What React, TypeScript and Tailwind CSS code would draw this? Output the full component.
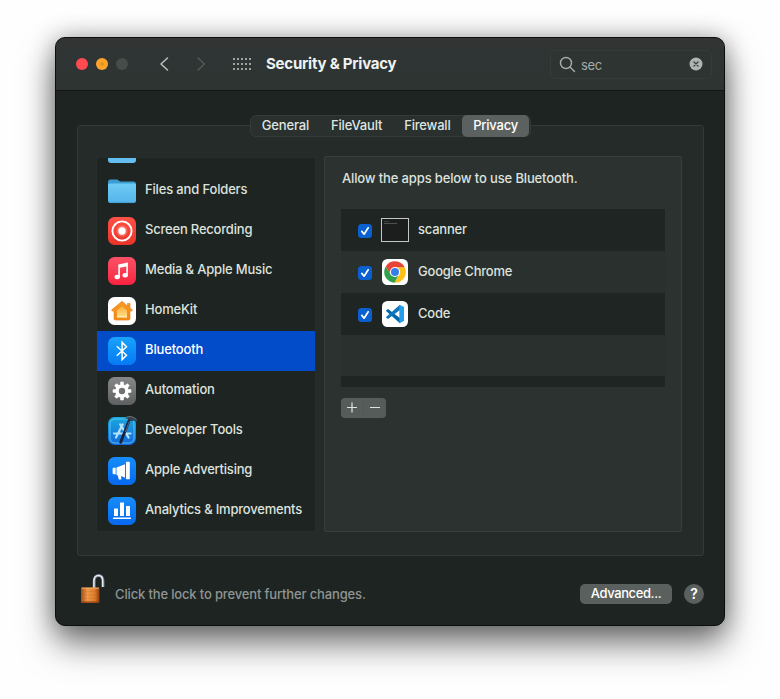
import type { ReactNode } from "react";

function Tile({ className, children }: { className: string; children: ReactNode }) {
  return (
    <div className={`flex h-7 w-7 items-center justify-center rounded-[6.5px] ${className}`}>{children}</div>
  );
}

function Folder() {
  return (
    <svg width="28" height="28" viewBox="0 0 28 28">
      <defs>
        <linearGradient id="folder" x1="0" y1="0" x2="0" y2="1">
          <stop offset="0" stopColor="#6fcbf6" />
          <stop offset="1" stopColor="#54b4ea" />
        </linearGradient>
      </defs>
      <path d="M0 5.2C0 3.400 .9 2.500 2.600 2.500h6.200c1.600 0 2 1.900 3.600 1.900h13C27.200 4.400 28 5.300 28 7v6H0z" fill="#3a9ccf" />
      <path d="M0 8.500C0 7.300.7 6.600 2 6.600h24c1.300 0 2 .7 2 1.900V23.500c0 1.700-.9 2.600-2.600 2.600H2.600C.9 26.100 0 25.200 0 23.500z" fill="url(#folder)" />
      <path d="M.5 24.300c.4.900 1.100 1.300 2.100 1.300h22.800c1 0 1.700-.4 2.100-1.300" fill="none" stroke="#3d98cc" strokeWidth=".8" />
    </svg>
  );
}

function Recording() {
  return (
    <Tile className="bg-linear-to-b from-[#ff5146] to-[#ea3328]">
      <svg width="28" height="28" viewBox="0 0 28 28">
        <circle cx="14" cy="14" r="9.600" fill="none" stroke="#fff" strokeWidth="1.900" />
        <circle cx="14" cy="14" r="5.500" fill="#ffb9ae" opacity=".35" />
        <circle cx="14" cy="14" r="3.700" fill="#fff" />
      </svg>
    </Tile>
  );
}

function Music() {
  return (
    <Tile className="bg-linear-to-b from-[#fb5066] to-[#f7203f]">
      <svg width="28" height="28" viewBox="0 0 28 28" fill="#fff">
        <path d="M10.300 7.600 19.900 5.500v12h-1.600V9.400l-6.400 1.400v9.200h-1.600z" />
        <ellipse cx="9.200" cy="20" rx="2.700" ry="2.200" />
        <ellipse cx="17.200" cy="18.300" rx="2.700" ry="2.200" />
      </svg>
    </Tile>
  );
}

function Home() {
  return (
    <Tile className="bg-white">
      <svg width="28" height="28" viewBox="0 0 28 28">
        <defs>
          <linearGradient id="home" x1="0" y1="0" x2="0" y2="1">
            <stop offset="0" stopColor="#f79a24" />
            <stop offset="1" stopColor="#f58b17" />
          </linearGradient>
          <linearGradient id="homeGlow" x1="0" y1="0" x2="0" y2="1">
            <stop offset="0" stopColor="#ffae3d" />
            <stop offset="1" stopColor="#ffe08a" />
          </linearGradient>
        </defs>
        <path d="M14 4.300 4 12.600c-.7.700-.3 1.500.5 1.500H6v7.400c0 1 .6 1.600 1.600 1.600h12.800c1 0 1.600-.6 1.600-1.600v-7.400h1.500c.8 0 1.200-.8.500-1.500L22 11V6.500h-2.500V9z" fill="url(#home)" stroke="#e97e14" strokeWidth=".6" strokeLinejoin="round" />
        <path d="M14 9.300 9 13.500v6.700h10v-6.700z" fill="url(#homeGlow)" />
        <path d="M9 19.800h10" stroke="#fff3c4" strokeWidth="1.200" />
      </svg>
    </Tile>
  );
}

function BluetoothIcon() {
  return (
    <Tile className="bg-linear-to-b from-[#1aa3fb] to-[#087af5]">
      <svg width="28" height="28" viewBox="0 0 28 28" fill="none" stroke="#fff" strokeWidth="1.500" strokeLinejoin="miter">
        <path d="m8.800 9.300 9.700 9-4.400 4.300V5.400l4.400 4.300-9.700 9" />
      </svg>
    </Tile>
  );
}

const teeth = [0, 45, 90, 135, 180, 225, 270, 315];

function Gear() {
  return (
    <Tile className="bg-linear-to-b from-[#88888b] to-[#5f6062]">
      <svg width="28" height="28" viewBox="0 0 28 28">
        {teeth.map((a) => (
          <path key={a} d="M12.200 8.500 12.700 5h2.600l.5 3.500z" fill="#fff" stroke="#fff" strokeWidth=".6" transform={`rotate(${a} 14 14)`} />
        ))}
        <circle cx="14" cy="14" r="4.900" fill="none" stroke="#fff" strokeWidth="3.400" />
      </svg>
    </Tile>
  );
}

function Xcode() {
  return (
    <svg width="32" height="30" viewBox="0 0 32 30" className="-mt-0.5 shrink-0">
      <defs>
        <linearGradient id="xcode" x1="0" y1="0" x2="0" y2="1">
          <stop offset="0" stopColor="#1aa8dd" />
          <stop offset="1" stopColor="#1469dc" />
        </linearGradient>
      </defs>
      <rect x="0" y="2" width="28" height="28" rx="6.500" fill="url(#xcode)" />
      <rect x="2" y="4" width="24" height="24" rx="4.800" fill="none" stroke="#59c8f4" strokeWidth=".9" />
      <g stroke="#b4e2fc" strokeWidth="2.200" strokeLinecap="round">
        <path d="M14.600 9.500 8 22.500M12.200 9.500 20.600 22.500M6 18.500h16.500" />
      </g>
      <path d="M21.300 5 12.700 27.300" stroke="#17233c" strokeWidth="2.900" strokeLinecap="round" />
      <path d="m21.500 6-4.200 11" stroke="#68758a" strokeWidth=".8" />
      <path d="M16.800 3.200c4.400-3.500 9.300-2 12.600 2.100l-.6 1.200c-1.800-1.300-3.200-1.100-4.700-.3l-2.800-1.100c-1.100-1.400-2.600-1.700-4.500-1.900z" fill="#36414b" />
      <path d="M17.500 2.700c4.100-2.400 8-.9 11 1.900" fill="none" stroke="#7d8f97" strokeWidth=".7" />
    </svg>
  );
}

function Megaphone() {
  return (
    <Tile className="bg-linear-to-b from-[#178dfb] to-[#0868ee]">
      <svg width="28" height="28" viewBox="0 0 28 28" fill="#fff">
        <path d="M5.500 10.800h2.200v6.400H6.100c-1 0-1.500-.5-1.500-1.300v-3.700c0-.9.400-1.400.900-1.400z" />
        <path d="M8.500 10.400 17 7.200v13.500l-3.800-1.700.1 3.600h-2.500l-1-4.200-1.300-.5z" />
        <path d="M18 5.800c0-.7.400-1 1-1h1.800c.7 0 1 .4 1 1v15.400c0 .7-.3 1-1 1H19c-.6 0-1-.3-1-1z" />
      </svg>
    </Tile>
  );
}

function Analytics() {
  return (
    <Tile className="bg-linear-to-b from-[#178dfb] to-[#0868ee]">
      <svg width="28" height="28" viewBox="0 0 28 28" fill="#fff">
        <rect x="6" y="11.500" width="4" height="7.500" rx=".6" />
        <rect x="12" y="5.500" width="4" height="13.500" rx=".6" />
        <rect x="18" y="9" width="4" height="10" rx=".6" />
        <rect x="5" y="20.400" width="18" height="1.500" rx=".5" />
      </svg>
    </Tile>
  );
}

const categories: { label: string; icon: ReactNode; tracking: string }[] = [
  { label: "Files and Folders", icon: <Folder />, tracking: "tracking-[-0.16px]" },
  { label: "Screen Recording", icon: <Recording />, tracking: "tracking-[-0.2px]" },
  { label: "Media & Apple Music", icon: <Music />, tracking: "tracking-[-0.18px]" },
  { label: "HomeKit", icon: <Home />, tracking: "tracking-[-0.2px]" },
  { label: "Bluetooth", icon: <BluetoothIcon />, tracking: "tracking-[-0.14px]" },
  { label: "Automation", icon: <Gear />, tracking: "tracking-[-0.18px]" },
  { label: "Developer Tools", icon: <Xcode />, tracking: "tracking-[-0.18px]" },
  { label: "Apple Advertising", icon: <Megaphone />, tracking: "tracking-[-0.22px]" },
  { label: "Analytics & Improvements", icon: <Analytics />, tracking: "tracking-[-0.2px]" },
];

function Terminal() {
  return (
    <svg width="28" height="28" viewBox="0 0 28 28">
      <rect x=".5" y="2.500" width="27" height="23" fill="#1c1e1e" stroke="#c2c8c5" />
      <path d="M3 7.500h13" stroke="#4c5250" strokeWidth="1" />
      <path d="M3 5.500h5" stroke="#3b403e" strokeWidth="1" />
    </svg>
  );
}

function Chrome() {
  return (
    <svg width="28" height="28" viewBox="0 0 28 28">
      <rect x="1" y="1" width="26" height="26" rx="5.500" fill="#fff" />
      <path d="M14 9.200h9.700A10.800 10.800 0 0 1 13.400 24.800L18.200 16.400z" fill="#fbc116" />
      <path d="M9.800 16.400 4.700 8.500A10.800 10.800 0 0 1 23.700 9.200H14z" fill="#e64435" />
      <path d="M4.700 8.500 9.800 16.400 14 18.800l3.500-1.300-4.100 7.300A10.800 10.800 0 0 1 4.700 8.500z" fill="#30a04c" />
      <circle cx="14" cy="14" r="5.100" fill="#fff" />
      <circle cx="14" cy="14" r="4" fill="#387ee8" />
    </svg>
  );
}

function Code() {
  return (
    <svg width="28" height="28" viewBox="0 0 28 28">
      <rect x="1" y="1" width="26" height="26" rx="5.500" fill="#fff" />
      <path d="M4.800 10.700 7 9 19.200 18.200v5.400z" fill="#0065a9" />
      <path d="M4.800 17.300 7 19 19.200 9.800V4.400z" fill="#0d75bd" />
      <path d="m18.300 4.700 4.700 2.200v14.200l-4.700 2.200z" fill="#249ded" />
    </svg>
  );
}

const apps = [
  { label: "scanner", icon: <Terminal />, row: "bg-[#1e2523]" },
  { label: "Google Chrome", icon: <Chrome />, row: "bg-[#29302e]" },
  { label: "Code", icon: <Code />, row: "bg-[#1e2523]" },
];

function Check() {
  return (
    <div className="mt-0.5 flex h-[14px] w-[14px] items-center justify-center rounded-[3.5px] bg-[#0b60d0]">
      <svg width="10" height="10" viewBox="0 0 10 10" fill="none" stroke="#fff" strokeWidth="1.700" strokeLinecap="round" strokeLinejoin="round">
        <path d="m1.800 5.400 2.300 2.800L8.200 1.800" />
      </svg>
    </div>
  );
}

function TitleBar() {
  return (
    <header className="flex h-[53px] shrink-0 items-center border-b border-[#121716] bg-linear-to-b from-[#333433] via-[#2f3534] via-25% to-[#2d3432] pl-5 pr-3">
      <div className="flex gap-2">
        <span className="h-3 w-3 rounded-full bg-[#fc4b51]" />
        <span className="flex h-3 w-3 items-center justify-center rounded-full bg-[#fca42b]">
          <span className="h-1 w-1 rounded-full bg-[#e88f1c]" />
        </span>
        <span className="h-3 w-3 rounded-full bg-[#474c4a]" />
      </div>
      <svg width="52" height="16" viewBox="0 0 52 16" fill="none" strokeWidth="1.500" strokeLinecap="round" strokeLinejoin="round" className="ml-[29px]">
        <path d="M10.500 2 4 8l6.500 6" stroke="#b9bfbc" />
        <path d="m41 2 6.500 6-6.500 6" stroke="#535956" />
      </svg>
      <svg width="20" height="14" viewBox="0 0 20 14" fill="#b3b9b6" className="ml-[23px]">
        {[1.500, 6.500, 11.500].map((y) =>
          [2, 6, 10, 14, 18].map((x) => <rect key={`${x}-${y}`} x={x - 1} y={y - 0.500} width="2" height="2" rx=".7" />),
        )}
      </svg>
      <h1 className="ml-[14px] w-[140px] whitespace-nowrap text-[15px] font-bold leading-5 tracking-[-0.22px] text-[#eef2f0]">Security &amp; Privacy</h1>
      <div className="ml-auto flex h-[29px] w-[162px] items-center rounded-[6px] border border-[#353c3a] bg-[#2d3432] pl-2 pr-2">
        <svg width="17" height="17" viewBox="0 0 17 17" fill="none" stroke="#a7aeab" strokeWidth="1.400" strokeLinecap="round">
          <circle cx="7" cy="7" r="5.500" />
          <path d="m11 11 4.500 4.500" />
        </svg>
        <span className="ml-[5px] mt-px text-[13px] leading-4 tracking-[-0.4px] text-[#a4aba8]">sec</span>
        <svg width="14" height="14" viewBox="0 0 14 14" className="ml-auto">
          <circle cx="7" cy="7" r="6.500" fill="#aeb4b1" />
          <path d="m4.900 4.900 4.200 4.200m0-4.200L4.900 9.100" stroke="#2d3432" strokeWidth="1.200" strokeLinecap="round" />
        </svg>
      </div>
    </header>
  );
}

function Tabs() {
  return (
    <nav className="relative z-10 mx-auto -mb-3 flex h-[22px] w-[281px] rounded-[6px] border border-[#343b39] bg-[#29302e] text-[13px] font-medium leading-[18px] text-[#dfe4e1]">
      <span className="w-[70px] text-center tracking-[-0.15px]">General</span>
      <span className="w-[73px] text-center tracking-[-0.15px]">FileVault</span>
      <span className="w-[69px] text-center tracking-[-0.2px]">Firewall</span>
      <span className="-my-px w-[68px] rounded-[5px] bg-[#5a615e] pt-px text-center tracking-[-0.2px] text-white">Privacy</span>
    </nav>
  );
}

function Sidebar() {
  return (
    <aside className="mt-px flex h-[375px] w-[220px] flex-col overflow-hidden border border-[#262d2b] bg-[#1e2422]">
      <div className="h-[13px] shrink-0 pl-[11px]">
        <div className="h-[5px] w-7 rounded-b-[3px] bg-[#64bff0]" />
      </div>
      {categories.map((c) => (
        <div key={c.label} className={`flex h-10 shrink-0 items-center pl-[11px] ${c.label === "Bluetooth" ? "bg-[#024bc9] text-white" : "text-[#dde2df]"}`}>
          <div className="flex h-7 w-7 shrink-0 items-center">{c.icon}</div>
          <span className={`-mt-1 ml-[9px] whitespace-nowrap pb-px text-[13px] font-medium leading-4 ${c.tracking}`}>{c.label}</span>
        </div>
      ))}
    </aside>
  );
}

function AppPanel() {
  return (
    <section className="h-[376px] w-[358px] rounded-[2px] border border-[#38403d] bg-[#2b3230] pl-4 pt-3">
      <p className="whitespace-nowrap pl-px text-[13px] font-medium leading-[18px] tracking-[-0.14px] text-[#dde2df]">Allow the apps below to use Bluetooth.</p>
      <div className="mt-[22px] h-[178px] w-[324px] overflow-hidden">
        {apps.map((a) => (
          <div key={a.label} className={`flex h-[42px] items-center pl-[17px] ${a.row}`}>
            <Check />
            <div className="ml-[9px]">{a.icon}</div>
            <span className="ml-[9px] -mt-0.5 text-[13px] font-medium leading-4 tracking-[-0.22px] text-[#dde2df]">{a.label}</span>
          </div>
        ))}
        <div className="h-[41px] bg-[#29302e]" />
        <div className="h-[11px] bg-[#1e2523]" />
      </div>
      <div className="mt-[11px] flex h-5 w-[45px] items-center rounded-[4px] bg-[#555c59]">
        <svg width="45" height="20" viewBox="0 0 45 20" stroke="#dfe4e1" strokeWidth="1.200">
          <path d="M6 9.500h10M11 4.500v10M29 9.500h10" />
          <path d="M22.500 3v14" stroke="#4f5653" strokeWidth="1" />
        </svg>
      </div>
    </section>
  );
}

function Padlock() {
  return (
    <svg width="26" height="32" viewBox="0 0 26 32">
      <defs>
        <linearGradient id="brass" x1="0" y1="0" x2="1" y2="0">
          <stop offset="0" stopColor="#a54d15" />
          <stop offset=".35" stopColor="#ef9849" />
          <stop offset=".75" stopColor="#dc7b2c" />
          <stop offset="1" stopColor="#8c3d0e" />
        </linearGradient>
      </defs>
      <path d="M14.200 15.500V8c0-3.200 1.600-5.500 4.300-5.500S23 4.800 23 8v6" fill="none" stroke="#6e7984" strokeWidth="3" />
      <path d="M13.900 15V8c0-3.200 1.800-5.600 4.600-5.600S22.700 4.800 22.700 8v6" fill="none" stroke="#e6edf5" strokeWidth="1.500" />
      <rect x="1" y="14.500" width="18.500" height="15.500" rx="1.200" fill="url(#brass)" />
      <path d="M1.500 15.200h17.500" stroke="#f3ae68" strokeWidth="1" />
      <path d="M1.500 18.500h17.500M1.500 22h17.500M1.500 25.500h17.500" stroke="#b9601d" strokeWidth=".7" opacity=".3" />
      <path d="M1.500 29.200h17.500" stroke="#8a3b10" strokeWidth="1.200" />
    </svg>
  );
}

export default function App() {
  return (
    <main className="h-[699px] w-[780px] overflow-hidden bg-[#fefefe] pl-[55px] pt-[37px] font-['Inter','Liberation_Sans',sans-serif]">
      <div className="flex h-[589px] w-[670px] flex-col overflow-hidden rounded-[10px] border border-[#0c0f0e] bg-[#1e2422] shadow-[0_18px_34px_rgba(0,0,0,0.52),0_0_24px_rgba(0,0,0,0.3)]">
        <TitleBar />
        <div className="px-[21px] pt-6">
          <Tabs />
          <div className="flex h-[431px] w-[627px] justify-between rounded-[3px] border border-[#323937] bg-[#242b29] pl-[18px] pr-[21px] pt-[30px]">
            <Sidebar />
            <AppPanel />
          </div>
          <footer className="-mr-px flex h-[69px] items-center">
            <div className="ml-[3px] -mt-1">
              <Padlock />
            </div>
            <span className="ml-[9px] mt-[7px] whitespace-nowrap text-[13px] font-medium leading-4 tracking-[-0.15px] text-[#8e9592]">Click the lock to prevent further changes.</span>
            <div className="ml-auto mt-[6px] h-5 w-[92px] rounded-[5px] bg-[#59605d] text-center text-[13px] font-medium leading-[19px] tracking-[-0.4px] text-white">Advanced...</div>
            <div className="ml-3 mt-[6px] h-5 w-5 rounded-full bg-[#59605d] text-center text-[14px] font-semibold leading-5 text-white">?</div>
          </footer>
        </div>
      </div>
    </main>
  );
}
